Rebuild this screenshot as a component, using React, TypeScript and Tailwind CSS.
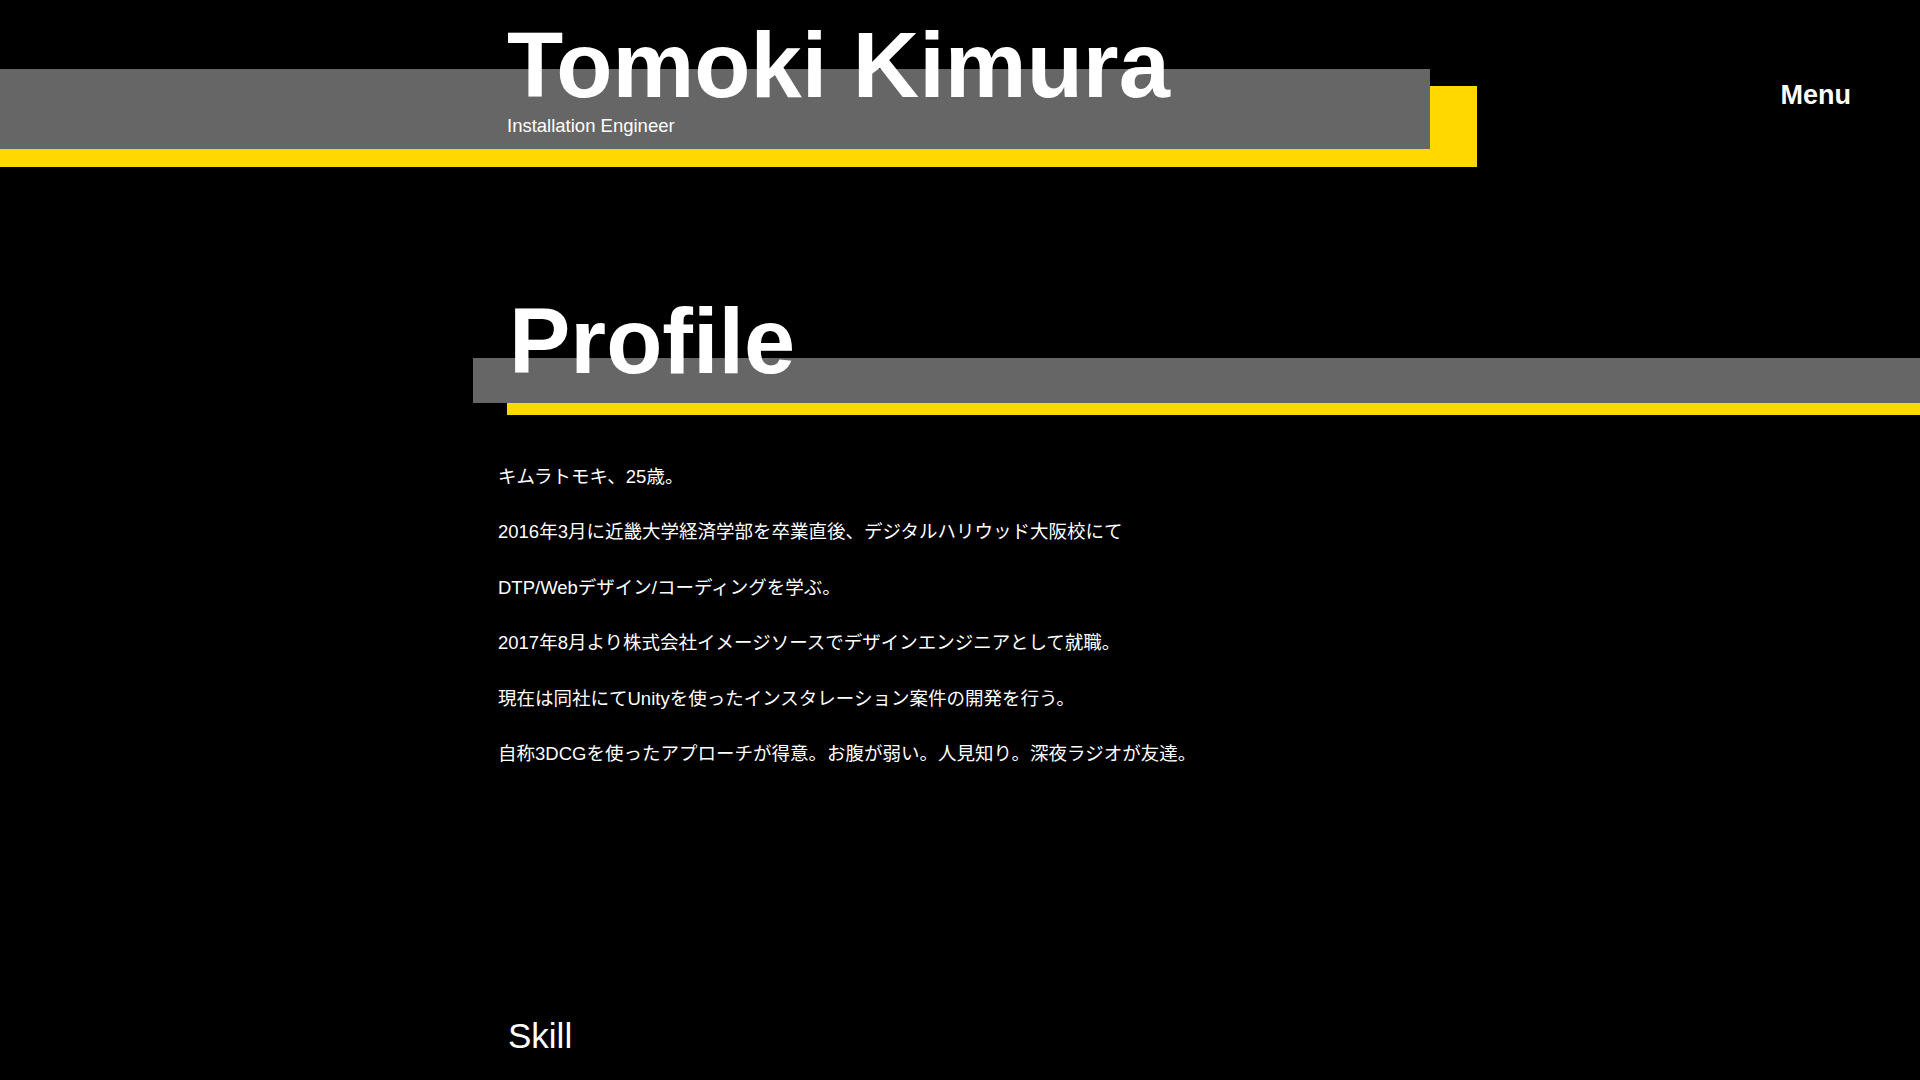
const lines = [
  "キムラトモキ、25歳。",
  "2016年3月に近畿大学経済学部を卒業直後、デジタルハリウッド大阪校にて",
  "DTP/Webデザイン/コーディングを学ぶ。",
  "2017年8月より株式会社イメージソースでデザインエンジニアとして就職。",
  "現在は同社にてUnityを使ったインスタレーション案件の開発を行う。",
  "自称3DCGを使ったアプローチが得意。お腹が弱い。人見知り。深夜ラジオが友達。",
];

export default function App() {
  return (
    <div className="flex h-[1080px] w-full flex-col overflow-hidden bg-black text-white font-['Liberation_Sans','Noto_Sans_CJK_JP',sans-serif]">
      {/* Header */}
      <header className="flex items-start justify-between">
        <div className="mt-[86px] flex h-[81px] w-[1477px] flex-col bg-[#ffd800]">
          <div className="-mt-[17px] flex h-[80px] w-[1430px] flex-col bg-[#666666] pl-[507px]">
            <h1 className="-mt-[50px] text-[92px] font-bold leading-none">Tomoki Kimura</h1>
            <p className="mt-[6px] text-[18.5px] leading-none">Installation Engineer</p>
          </div>
        </div>
        <nav className="pr-[69px] pt-[82px] text-[27px] font-bold leading-none">Menu</nav>
      </header>

      {/* Profile */}
      <section className="mt-[191px] flex flex-col">
        <div className="ml-[473px] flex h-[45px] flex-col bg-[#666666] pl-[36px]">
          <h2 className="-mt-[63px] text-[92px] font-bold leading-none">Profile</h2>
        </div>
        <div className="ml-[507px] h-[12px] bg-[#ffd800]" />

        <div className="mt-[34px] flex flex-col pl-[498px]">
          {lines.map((l, i) => (
            <p key={i} className="text-[18.5px] leading-[55.4px]">{l}</p>
          ))}
        </div>
      </section>

      {/* Skill */}
      <section className="mt-[237px] flex flex-col pl-[508px]">
        <h2 className="text-[35px] leading-none">Skill</h2>
      </section>
    </div>
  );
}
